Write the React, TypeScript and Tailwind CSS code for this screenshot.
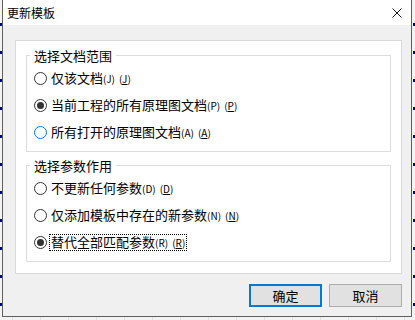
import React from "react";

function Radio({ checked = false, hover = false }: { checked?: boolean; hover?: boolean }) {
  return (
    <span
      className={
        "w-[13px] h-[13px] shrink-0 rounded-full border bg-white flex items-center justify-center " +
        (hover ? "border-[#0078d7]" : "border-[#333333]")
      }
    >
      {checked && <span className="w-[7px] h-[7px] rounded-full bg-[#333333]" />}
    </span>
  );
}

function Row({
  label,
  k,
  checked = false,
  hover = false,
  focus = false,
}: {
  label: string;
  k: string;
  checked?: boolean;
  hover?: boolean;
  focus?: boolean;
}) {
  return (
    <div className="h-[27px] flex items-center">
      <Radio checked={checked} hover={hover} />
      <span
        className={
          "ml-[2px] px-[1px] border leading-[14px] text-[13px] flex items-baseline whitespace-nowrap " +
          (focus ? "border-dotted border-black" : "border-transparent")
        }
      >
        <span>{label}</span>
        <span className="text-[10px]">({k})</span>
        <span className="text-[10px] ml-[4px]">
          (<span className="underline">{k}</span>)
        </span>
      </span>
    </div>
  );
}

function Group({ title, className, children }: { title: string; className: string; children: React.ReactNode }) {
  return (
    <fieldset className={"mx-[10px] border border-[#dcdcdc] " + className}>
      <legend className="ml-[3px] px-[4px] text-[13px] leading-[17px]">{title}</legend>
      <div className="pl-[7px] pt-[1px] pb-[5px]">{children}</div>
    </fieldset>
  );
}

export default function App() {
  return (
    <div className="w-[415px] h-[320px] overflow-hidden flex items-start bg-[#f3f3f3] bg-[linear-gradient(to_right,#dedede_1px,transparent_1px)] bg-[length:28px_28px] bg-[position:12px_0] text-black [font-family:'Noto_Sans_CJK_SC','Noto_Sans',sans-serif]">
      <div className="w-[2px] h-[320px] shrink-0 bg-[repeating-linear-gradient(to_bottom,transparent_0_23px,#000080_23px_26px,transparent_26px_28px)]" />
      <div className="w-[410px] h-[317px] shrink-0 flex flex-col bg-[#f0f0f0] border-x border-b border-[#5f5f5f]">
        <div className="h-[25px] shrink-0 bg-white flex items-center justify-between pl-[4px] pr-[9px]">
          <span className="text-[12px] leading-[16px]">更新模板</span>
          <svg width="10" height="10" viewBox="0 0 10 10" className="block">
            <path d="M0.5 0.5 L9.5 9.5 M9.5 0.5 L0.5 9.5" stroke="#1a1a1a" strokeWidth="1" fill="none" />
          </svg>
        </div>
        <div className="flex-1 flex flex-col pl-[12px] pr-[9px] pt-[15px]">
          <div className="bg-white border border-[#d9d9d9] pb-[11px]">
            <Group title="选择文档范围" className="mt-[6px]">
              <Row label="仅该文档" k="J" />
              <Row label="当前工程的所有原理图文档" k="P" checked />
              <Row label="所有打开的原理图文档" k="A" hover />
            </Group>
            <Group title="选择参数作用" className="mt-[5px]">
              <Row label="不更新任何参数" k="D" />
              <Row label="仅添加模板中存在的新参数" k="N" />
              <Row label="替代全部匹配参数" k="R" checked focus />
            </Group>
          </div>
          <div className="mt-[10px] flex justify-end gap-[7px]">
            <button className="w-[73px] h-[23px] bg-[#e1e1e1] border-2 border-[#0078d7] text-[13px] leading-[17px] flex items-center justify-center">
              确定
            </button>
            <button className="w-[73px] h-[23px] bg-[#e1e1e1] border border-[#adadad] text-[13px] leading-[17px] flex items-center justify-center">
              取消
            </button>
          </div>
        </div>
      </div>
      <div className="flex-1 h-[320px] flex">
        <div className="ml-[1px] w-[2px] h-[320px] bg-[repeating-linear-gradient(to_bottom,transparent_0_23px,#000080_23px_26px,transparent_26px_28px)]" />
      </div>
    </div>
  );
}
